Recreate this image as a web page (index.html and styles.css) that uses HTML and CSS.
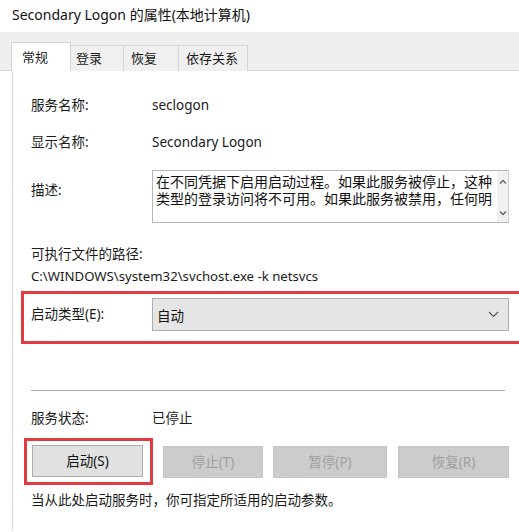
FILE: index.html
```html
<!DOCTYPE html>
<html lang="zh-CN">
<head>
<meta charset="utf-8">
<title>Secondary Logon 的属性(本地计算机)</title>
<link rel="stylesheet" href="styles.css">
</head>
<body>
<div class="title">Secondary Logon 的属性(本地计算机)</div>
<div class="tabbar">
  <div class="tab active t1">常规</div>
  <div class="tab t2">登录</div>
  <div class="tab t3">恢复</div>
  <div class="tab t4">依存关系</div>
</div>
<div class="panel">
  <div class="row r-name"><span class="label">服务名称:</span><span class="value">seclogon</span></div>
  <div class="row r-display"><span class="label">显示名称:</span><span class="value">Secondary Logon</span></div>
  <div class="row r-desc">
    <span class="label desc-label">描述:</span>
    <div class="textarea">
      <div class="ta-text">在不同凭据下启用启动过程。如果此服务被停止，这种类型的登录访问将不可用。如果此服务被禁用，任何明</div>
      <div class="ta-scroll">
        <svg width="8" height="6" viewBox="0 0 8 6"><path d="M1 4.5 L4 1.5 L7 4.5" fill="none" stroke="#606060" stroke-width="1.3"/></svg>
        <svg width="8" height="6" viewBox="0 0 8 6"><path d="M1 1.5 L4 4.5 L7 1.5" fill="none" stroke="#606060" stroke-width="1.3"/></svg>
      </div>
    </div>
  </div>
  <div class="row r-pathlabel"><span class="label wide">可执行文件的路径:</span></div>
  <div class="row r-path">C:\WINDOWS\system32\svchost.exe -k netsvcs</div>
  <div class="redbox startup">
    <span class="label">启动类型(E):</span>
    <div class="select">
      <span>自动</span>
      <svg width="11" height="7" viewBox="0 0 11 7"><path d="M1 1 L5.5 5.5 L10 1" fill="none" stroke="#555" stroke-width="1.1"/></svg>
    </div>
  </div>
  <div class="separator"></div>
  <div class="row r-status"><span class="label">服务状态:</span><span class="value">已停止</span></div>
  <div class="buttons">
    <div class="redbox btnbox"><div class="btn primary b1">启动(S)</div></div>
    <div class="btn disabled b2">停止(T)</div>
    <div class="btn disabled b3">暂停(P)</div>
    <div class="btn disabled b4">恢复(R)</div>
  </div>
  <div class="row r-hint">当从此处启动服务时，你可指定所适用的启动参数。</div>
</div>
</body>
</html>
```

FILE: styles.css
```css
html, body {
  margin: 0;
  padding: 0;
  background: #ffffff;
  overflow: hidden;
}
body {
  width: 519px;
  height: 532px;
  font-family: "Noto Sans", "Noto Sans CJK SC", sans-serif;
  font-size: 13.5px;
  color: #1a1a1a;
}
.title {
  height: 32px;
  line-height: 30px;
  padding-left: 12px;
  font-size: 14px;
  color: #111;
}
.tabbar {
  height: 38px;
  background: #efefef;
  border-bottom: 1px solid #d6d6d6;
  display: flex;
  align-items: flex-end;
  padding-left: 11px;
}
.tab {
  box-sizing: border-box;
  height: 26px;
  margin-bottom: -1px;
  border: 1px solid #d6d6d6;
  border-left: none;
  border-bottom: none;
  background: #f0f0f0;
  padding-left: 10px;
  line-height: 24px;
  font-size: 13px;
}
.tab.active {
  height: 29px;
  background: #ffffff;
  border-left: 1px solid #d6d6d6;
  line-height: 28px;
  padding-left: 10px;
}
.t1 { width: 60px; }
.t2 { width: 53px; padding-left: 5px; }
.t3 { width: 55px; padding-left: 7px; }
.t4 { width: 69px; padding-left: 7px; }

.panel {
  margin-left: 12px;
  border-left: 1px solid #dadada;
  padding-left: 18px;
  padding-right: 10px;
  height: 460px;
}
.row {
  display: flex;
  height: 20px;
  line-height: 20px;
}
.label {
  width: 121px;
  flex: none;
}
.label.wide { width: auto; }
.r-name { padding-top: 24px; }
.r-display { margin-top: 17px; }
.r-desc {
  margin-top: 18px;
  height: 53px;
}
.desc-label { padding-top: 10px; }
.textarea {
  flex: 1;
  display: flex;
  box-sizing: border-box;
  height: 53px;
  border: 1px solid #b8b8b8;
  border-right-color: #d0d0d0;
}
.ta-text {
  flex: 1;
  font-size: 14px;
  line-height: 17px;
  padding: 2px 0 0 3px;
  height: 50px;
  overflow: hidden;
  color: #111;
}
.ta-scroll {
  width: 11px;
  background: #f0f0f0;
  display: flex;
  flex-direction: column;
  justify-content: space-between;
  align-items: center;
  padding: 8px 0 6px;
}
.r-pathlabel { margin-top: 21px; }
.r-path { margin-top: 2px; font-size: 13.2px; }

.redbox {
  border: 3px solid #e23b3f;
  box-sizing: border-box;
}
.startup {
  margin: 5px -14px 0 -10px;
  height: 53px;
  display: flex;
  align-items: flex-start;
  padding: 4px 11px 0 7px;
}
.startup .label {
  line-height: 33px;
}
.select {
  flex: 1;
  box-sizing: border-box;
  height: 33px;
  background: #e5e5e5;
  border: 1px solid #adadad;
  display: flex;
  align-items: center;
  justify-content: space-between;
  padding: 0 9px 0 4px;
  color: #111;
}
.separator {
  margin-top: 46px;
  margin-right: 4px;
  height: 1px;
  background: #a8a8a8;
}
.r-status { margin-top: 17px; }

.buttons {
  margin-top: 10px;
  display: flex;
  align-items: center;
  height: 47px;
}
.btnbox {
  margin-left: -7px;
  width: 129px;
  height: 47px;
  padding: 4px 0 0 5px;
}
.btn {
  box-sizing: border-box;
  height: 32px;
  line-height: 30px;
  text-align: center;
}
.btn.primary {
  width: 111px;
  background: #e1e1e1;
  border: 1px solid #adadad;
  color: #111;
}
.btn.disabled {
  background: #cccccc;
  border: 1px solid #c4c4c4;
  color: #a0a0a0;
}
.b2 { width: 100px; margin-left: 10px; }
.b3 { width: 114px; margin-left: 10px; }
.b4 { width: 111px; margin-left: 11px; }
.r-hint { margin-top: 5px; }
```
